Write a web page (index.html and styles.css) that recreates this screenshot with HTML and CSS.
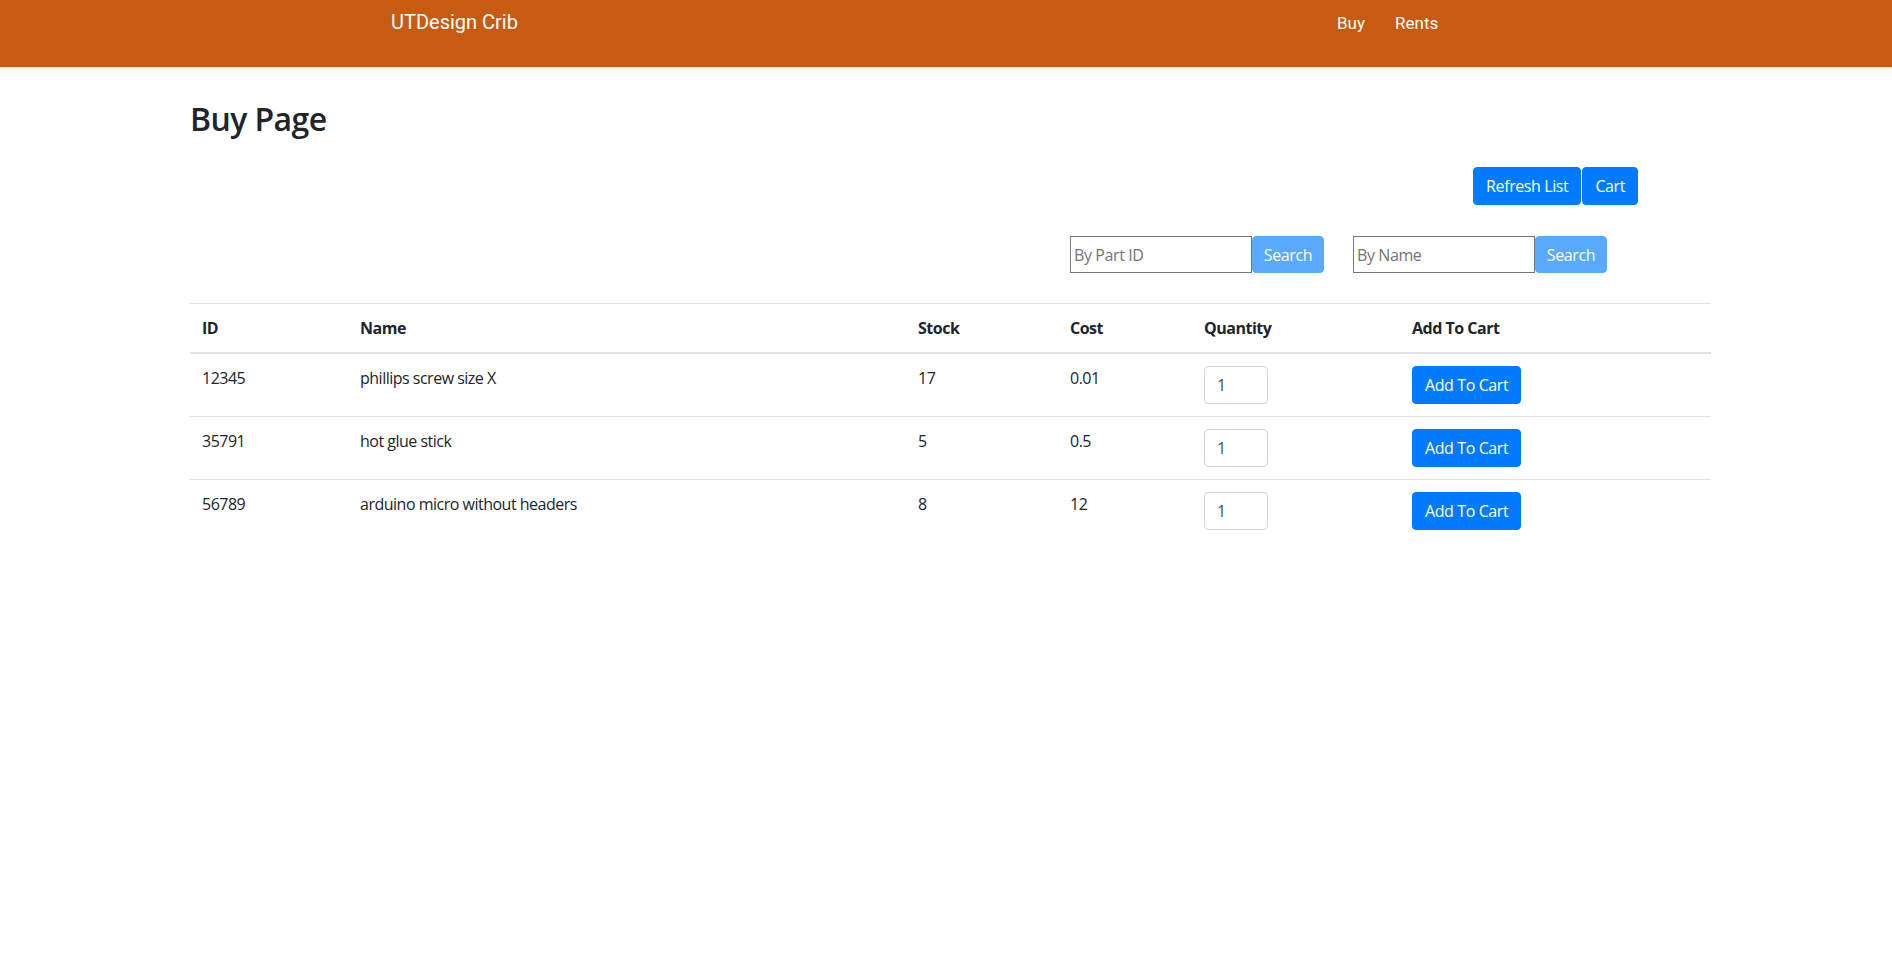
FILE: index.html
```html
<!DOCTYPE html>
<html lang="en">
<head>
<meta charset="utf-8">
<title>UTDesign Crib - Buy</title>
<link rel="stylesheet" href="styles.css">
</head>
<body>
<nav class="navbar">
  <div class="navbar-inner">
    <a class="brand" href="#">UTDesign Crib</a>
    <ul class="nav">
      <li><a href="#">Buy</a></li>
      <li><a href="#">Rents</a></li>
    </ul>
  </div>
</nav>
<main class="container">
  <h2 class="page-title">Buy Page</h2>
  <div class="toolbar">
    <button class="btn btn-primary">Refresh List</button>
    <button class="btn btn-primary">Cart</button>
  </div>
  <div class="search-row">
    <div class="search-group">
      <input class="search-input" type="text" placeholder="By Part ID">
      <button class="btn btn-search">Search</button>
    </div>
    <div class="search-group">
      <input class="search-input" type="text" placeholder="By Name">
      <button class="btn btn-search">Search</button>
    </div>
  </div>
  <table class="table">
    <colgroup>
      <col class="c-id"><col class="c-name"><col class="c-stock"><col class="c-cost"><col class="c-qty"><col class="c-add">
    </colgroup>
    <thead>
      <tr><th>ID</th><th>Name</th><th>Stock</th><th>Cost</th><th>Quantity</th><th>Add To Cart</th></tr>
    </thead>
    <tbody>
      <tr>
        <td>12345</td><td>phillips screw size X</td><td>17</td><td>0.01</td>
        <td><input class="qty" type="text" value="1"></td>
        <td><button class="btn btn-primary">Add To Cart</button></td>
      </tr>
      <tr>
        <td>35791</td><td>hot glue stick</td><td>5</td><td>0.5</td>
        <td><input class="qty" type="text" value="1"></td>
        <td><button class="btn btn-primary">Add To Cart</button></td>
      </tr>
      <tr>
        <td>56789</td><td>arduino micro without headers</td><td>8</td><td>12</td>
        <td><input class="qty" type="text" value="1"></td>
        <td><button class="btn btn-primary">Add To Cart</button></td>
      </tr>
    </tbody>
  </table>
</main>
</body>
</html>
```
FILE: styles.css
```css
* { box-sizing: border-box; }

body {
  margin: 0;
  font-family: "Open Sans", "Noto Sans", sans-serif;
  font-size: 16px;
  line-height: 1.5;
  color: #212529;
  background: #fff;
  letter-spacing: -0.5px;
}

.navbar {
  background: #c75b12;
  height: 67px;
}

.navbar-inner {
  display: grid;
  grid-template-columns: 946px auto;
  align-items: baseline;
  padding: 7px 0 0 391px;
  font-family: Roboto, "Liberation Sans", sans-serif;
  letter-spacing: 0;
}

.brand {
  color: #fff;
  font-size: 20px;
  line-height: 30px;
  text-decoration: none;
}

.nav {
  display: flex;
  gap: 30px;
  list-style: none;
  margin: 0;
  padding: 0;
}

.nav a {
  color: #fff;
  font-size: 17px;
  text-decoration: none;
}

.container {
  width: 1521px;
  margin-left: 190px;
}

.page-title {
  margin: 33px 0 0;
  font-size: 32px;
  font-weight: 600;
  line-height: 1.2;
  letter-spacing: -0.6px;
}

.toolbar {
  display: flex;
  justify-content: flex-end;
  gap: 1px;
  margin-top: 29px;
  padding-right: 73px;
}

.btn {
  font-family: inherit;
  font-size: 16px;
  letter-spacing: -0.4px;
  line-height: 24px;
  height: 38px;
  padding: 6px 12px;
  border: 1px solid transparent;
  border-radius: 4px;
  color: #fff;
  cursor: pointer;
}

.btn-primary {
  background: #007bff;
  border-color: #007bff;
}

.search-row {
  display: flex;
  justify-content: flex-end;
  gap: 29px;
  margin-top: 31px;
  padding-right: 104px;
}

.search-group {
  display: flex;
}

.search-input {
  width: 182px;
  height: 37px;
  border: 1px solid #767676;
  border-radius: 0;
  padding: 0 3px;
  font-family: inherit;
  font-size: 16px;
  letter-spacing: -0.4px;
  color: #212529;
}

.search-input::placeholder {
  color: #757575;
}

.btn-search {
  width: 72px;
  height: 37px;
  background: rgb(89, 169, 255);
  border-color: rgb(89, 169, 255);
  padding: 5px 0;
}

.table {
  width: 1521px;
  margin-top: 30px;
  border-collapse: collapse;
  table-layout: fixed;
}

.c-id { width: 158px; }
.c-name { width: 558px; }
.c-stock { width: 152px; }
.c-cost { width: 134px; }
.c-qty { width: 208px; }
.c-add { width: 311px; }

.table th,
.table td {
  padding: 12px;
  text-align: left;
  vertical-align: top;
  border-top: 1px solid #dee2e6;
}

.table th {
  font-weight: 700;
  border-bottom: 2px solid #dee2e6;
}

.qty {
  display: block;
  width: 64px;
  height: 38px;
  padding: 6px 12px;
  border: 1px solid #ced4da;
  border-radius: 4px;
  font-family: inherit;
  font-size: 16px;
  color: #495057;
}
```
